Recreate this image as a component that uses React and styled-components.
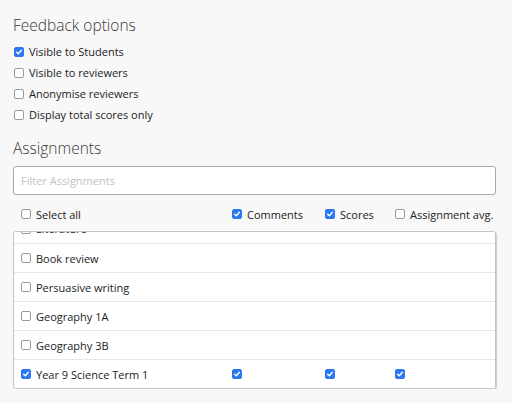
import React, { useLayoutEffect, useRef } from "react";
import styled, { createGlobalStyle } from "styled-components";

const GlobalStyle = createGlobalStyle`
  html, body {
    margin: 0;
    padding: 0;
    background: #f8f8f8;
    font-family: "Open Sans", "Noto Sans", sans-serif;
    color: #222;
  }
`;

const feedbackOptions = [
  { label: "Visible to Students", checked: true },
  { label: "Visible to reviewers", checked: false },
  { label: "Anonymise reviewers", checked: false },
  { label: "Display total scores only", checked: false },
];

const assignments = [
  { name: "Literature", selected: false },
  { name: "Book review", selected: false },
  { name: "Persuasive writing", selected: false },
  { name: "Geography 1A", selected: false },
  { name: "Geography 3B", selected: false },
  { name: "Year 9 Science Term 1", selected: true, comments: true, scores: true, avg: true },
];

function Check({ checked }) {
  return (
    <Box $checked={checked}>
      {checked && (
        <svg width="8" height="8" viewBox="0 0 8 8">
          <path d="M1.6 4.2 L3.3 5.8 L6.4 2.2" fill="none" stroke="#fff" strokeWidth="1.4" strokeLinecap="round" strokeLinejoin="round" />
        </svg>
      )}
    </Box>
  );
}

export default function App() {
  const listRef = useRef(null);

  // the list is shown scrolled a little, first row half hidden
  useLayoutEffect(() => {
    if (listRef.current) listRef.current.scrollTop = 18;
  }, []);

  return (
    <Page>
      <GlobalStyle />
      <Title>Feedback options</Title>
      <OptionList>
        {feedbackOptions.map((o) => (
          <Option key={o.label}>
            <Check checked={o.checked} />
            {o.label}
          </Option>
        ))}
      </OptionList>

      <Title $gap={12}>Assignments</Title>
      <Filter placeholder="Filter Assignments" />

      <HeaderRow>
        <Cell>
          <Check checked={false} />
          Select all
        </Cell>
        <Cell>
          <Check checked />
          Comments
        </Cell>
        <Cell>
          <Check checked />
          Scores
        </Cell>
        <Cell>
          <Check checked={false} />
          Assignment avg.
        </Cell>
      </HeaderRow>

      <List ref={listRef}>
        {assignments.map((a) => (
          <Row key={a.name}>
            <Cell>
              <Check checked={a.selected} />
              {a.name}
            </Cell>
            <Cell>{a.selected && <Check checked={a.comments} />}</Cell>
            <Cell>{a.selected && <Check checked={a.scores} />}</Cell>
            <Cell>{a.selected && <Check checked={a.avg} />}</Cell>
          </Row>
        ))}
      </List>
    </Page>
  );
}

const Page = styled.div`
  padding: 14px 16px 0 13px;
  width: 483px;
`;

const Title = styled.h2`
  margin: ${(p) => p.$gap || 0}px 0 0;
  font-size: 15.5px;
  line-height: 22px;
  font-weight: 300;
  color: #3a3a3a;
`;

const OptionList = styled.div`
  margin-top: 5px;
  display: flex;
  flex-direction: column;
`;

const Option = styled.label`
  display: flex;
  align-items: center;
  gap: 5px;
  height: 21px;
  padding-left: 1px;
  font-size: 11px;
  color: #222;
`;

const Box = styled.span`
  box-sizing: border-box;
  width: 10px;
  height: 10px;
  flex: none;
  border-radius: 2px;
  display: inline-flex;
  align-items: center;
  justify-content: center;
  background: ${(p) => (p.$checked ? "#2b78ef" : "#fff")};
  border: 1px solid ${(p) => (p.$checked ? "#2b78ef" : "#9a9a9a")};
`;

const Filter = styled.input`
  box-sizing: border-box;
  display: block;
  margin-top: 7px;
  width: 483px;
  height: 29px;
  padding: 0 7px;
  border: 1px solid #a8a8a8;
  border-radius: 3px;
  background: #fff;
  font-family: inherit;
  font-size: 11px;
  outline: none;
  &::placeholder {
    color: #c2c2c2;
  }
`;

const columns = `grid-template-columns: 211px 93px 70px 1fr;`;

const HeaderRow = styled.div`
  display: grid;
  ${columns}
  align-items: center;
  margin-top: 7px;
  height: 24px;
  padding-left: 8px;
  font-size: 11px;
`;

const Cell = styled.div`
  display: flex;
  align-items: center;
  gap: 5px;
  white-space: nowrap;
`;

const List = styled.div`
  box-sizing: border-box;
  margin-top: 5px;
  width: 483px;
  height: 158px;
  overflow-y: auto;
  scrollbar-width: none;
  background: #fff;
  border: 1px solid #c4c4c4;
  border-radius: 3px;
  box-shadow: 1px 1px 1px rgba(0, 0, 0, 0.18);
`;

const Row = styled.div`
  display: grid;
  ${columns}
  align-items: center;
  height: 29px;
  box-sizing: border-box;
  padding-left: 7px;
  font-size: 11px;
  & + & {
    border-top: 1px solid #e6e6e6;
  }
`;
